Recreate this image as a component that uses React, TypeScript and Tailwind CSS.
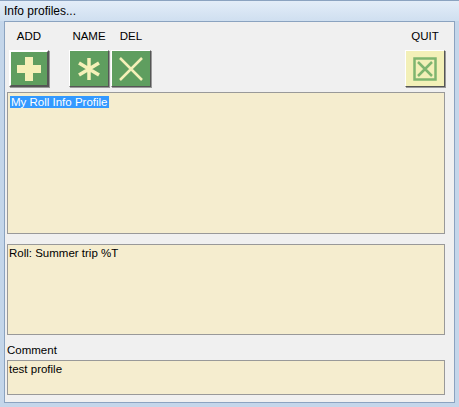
export default function App() {
  const btn = "w-[40px] h-[37px] flex items-center justify-center border border-t-white border-l-white border-r-[#555] border-b-[#555] shadow-[1px_1px_0_#999]";
  return (
    <div className="w-[459px] h-[407px] bg-[#c4d6ea] flex flex-col text-[11.5px] text-black" style={{ fontFamily: "'Liberation Sans', Arial, sans-serif" }}>
      <div className="h-[21px] px-[4px] flex items-center text-[12px] bg-gradient-to-b from-[#e3edf8] to-[#cfdff0] border-t border-[#8ba3c0]">Info profiles...</div>
      <div className="flex-1 mx-[4px] mb-[4px] bg-[#f0f0f0] border border-[#8ba3c0] pl-[2px] pr-[9px] flex flex-col">
        <div className="flex items-end h-[70px] pb-[5px]">
          <div className="flex flex-col items-center ml-[2px]">
            <span className="mb-[5px]">ADD</span>
            <div className={btn + " bg-[#5f9e5f] border-[#333] border-2"}>
              <svg width="24" height="24" viewBox="0 0 24 24"><path d="M8 0h8v8h8v8h-8v8H8v-8H0V8h8z" fill="#f5f0b8" /></svg>
            </div>
          </div>
          <div className="flex flex-col items-center ml-[20px]">
            <span className="mb-[5px]">NAME</span>
            <div className={btn + " bg-[#5f9e5f]"}>
              <svg width="24" height="24" viewBox="0 0 24 24" stroke="#f5f0b8" strokeWidth="3.5"><path d="M12 1v22M2 6l20 12M22 6L2 18" /></svg>
            </div>
          </div>
          <div className="flex flex-col items-center ml-[2px]">
            <span className="mb-[5px]">DEL</span>
            <div className={btn + " bg-[#5f9e5f]"}>
              <svg width="26" height="26" viewBox="0 0 26 26" stroke="#f5f0b8" strokeWidth="2.5"><path d="M2 2l22 22M24 2L2 24" /></svg>
            </div>
          </div>
          <div className="flex-1" />
          <div className="flex flex-col items-center">
            <span className="mb-[5px]">QUIT</span>
            <div className={btn + " w-[38px] h-[35px] bg-[#f3f0b8]"}>
              <svg width="24" height="24" viewBox="0 0 24 24" fill="none" stroke="#7fb56f" strokeWidth="2.5"><rect x="1.5" y="1.5" width="21" height="21" /><path d="M5 5l14 14M19 5L5 19" /></svg>
            </div>
          </div>
        </div>
        <div className="h-[142px] bg-[#f5edcf] border border-[#999] px-[2px] pt-[1px]">
          <span className="bg-[#3399ff] text-white px-[1px]">My Roll Info Profile</span>
        </div>
        <div className="h-[91px] mt-[10px] bg-[#f5edcf] border border-[#999] px-[1px]">Roll: Summer trip %T</div>
        <div className="mt-[8px] mb-[3px] leading-[14px]">Comment</div>
        <div className="h-[35px] bg-[#f5edcf] border border-[#999] px-[1px]">test profile</div>
      </div>
    </div>
  );
}
